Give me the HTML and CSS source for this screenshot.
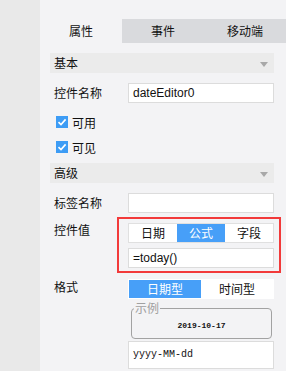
FILE: index.html
```html
<!DOCTYPE html>
<html>
	<head>
		<meta charset="utf-8">
		<link rel="stylesheet" href="styles.css">
		<title>属性</title>
	</head>
	<body>
		<div class="sidebar"></div>
		<div class="panel">
			<div class="tabs">
				<div class="tab active">属性</div>
				<div class="tab">事件</div>
				<div class="tab">移动端</div>
			</div>
			<div class="content">
				<!-- basic -->
				<div class="groupHead"><span>基本</span><span class="arrow"></span></div>
				<div class="row first">
					<div class="label">控件名称</div>
					<div class="field">dateEditor0</div>
				</div>
				<div class="check first"><span class="box"><svg width="12" height="12" viewBox="0 0 12 12"><path d="M2.5 6.2 L5 8.6 L9.6 3.4" fill="none" stroke="#fff" stroke-width="1.6"/></svg></span>可用</div>
				<div class="check"><span class="box"><svg width="12" height="12" viewBox="0 0 12 12"><path d="M2.5 6.2 L5 8.6 L9.6 3.4" fill="none" stroke="#fff" stroke-width="1.6"/></svg></span>可见</div>

				<!-- advanced -->
				<div class="groupHead advanced"><span>高级</span><span class="arrow"></span></div>
				<div class="row first">
					<div class="label">标签名称</div>
					<div class="field"></div>
				</div>
				<div class="row valueRow">
					<div class="label">控件值</div>
					<div class="highlight">
						<div class="segment">
							<div class="seg">日期</div>
							<div class="seg on">公式</div>
							<div class="seg">字段</div>
						</div>
						<div class="field formula">=today()</div>
					</div>
				</div>
				<div class="row formatRow">
					<div class="label">格式</div>
					<div class="formatBox">
						<div class="segment two">
							<div class="seg on">日期型</div>
							<div class="seg">时间型</div>
						</div>
						<fieldset class="sample">
							<legend>示例</legend>
							<div class="sampleDate">2019-10-17</div>
						</fieldset>
						<div class="field pattern">yyyy-MM-dd</div>
					</div>
				</div>
			</div>
		</div>
	</body>
</html>
```
FILE: styles.css
```css
body {
	margin: 0;
	display: flex;
	height: 371px;
	overflow: hidden;
	font-family: "Noto Sans CJK SC", "Liberation Sans", sans-serif;
	font-size: 12px;
	color: #111;
}
.sidebar {
	width: 40px;
	background-color: #e9e9e9;
}
.panel {
	flex: 1;
	background-color: #f3f3f5;
	padding-top: 19px;
}
.tabs {
	display: grid;
	grid-template-columns: 1fr 1fr 1fr;
	height: 24px;
}
.tab {
	background-color: #d9dadd;
	text-align: center;
	line-height: 24px;
	font-size: 12px;
}
.tab.active {
	background-color: #f3f3f5;
}
.content {
	padding: 10px 12px 0 10px;
}
.groupHead {
	height: 20px;
	line-height: 20px;
	background-color: #ebebeb;
	padding: 0 6px 0 4px;
	display: flex;
	justify-content: space-between;
	align-items: center;
}
.groupHead.advanced {
	margin-top: 6px;
}
.arrow {
	width: 0;
	height: 0;
	margin-top: 3px;
	border-left: 4px solid transparent;
	border-right: 4px solid transparent;
	border-top: 5px solid #a8a8a8;
}
.row {
	display: flex;
	align-items: flex-start;
}
.row.first {
	margin-top: 10px;
}
.label {
	width: 74px;
	padding-left: 4px;
	line-height: 20px;
}
.field {
	box-sizing: border-box;
	width: 146px;
	height: 20px;
	line-height: 18px;
	background-color: #fff;
	border: 1px solid #dcdcdc;
	padding-left: 4px;
	font-family: "Liberation Sans", sans-serif;
	font-size: 12px;
}
.check {
	display: flex;
	align-items: center;
	height: 20px;
	margin-top: 5px;
	padding-left: 6px;
}
.check.first {
	margin-top: 9px;
}
.box {
	width: 12px;
	height: 12px;
	background-color: #3d9cf5;
	margin-right: 4px;
	display: flex;
}
.valueRow {
	margin-top: 4px;
}
.valueRow .label {
	margin-top: 3px;
}
.highlight {
	margin: 0 -7px 0 -11px;
	border: 2px solid #f23a3a;
	padding: 4px 5px 3px 9px;
}
.segment {
	box-sizing: border-box;
	width: 146px;
	height: 20px;
	display: grid;
	grid-template-columns: 1fr 1fr 1fr;
	background-color: #fff;
	border: 1px solid #e0e0e0;
}
.segment.two {
	grid-template-columns: 1fr 1fr;
	border-color: #fff;
}
.seg {
	text-align: center;
	line-height: 18px;
	font-size: 12px;
}
.seg.on {
	background-color: #479ff8;
	color: #fff;
}
.formula {
	margin-top: 5px;
}
.formatRow {
	margin-top: 6px;
}
.formatRow .label {
	line-height: 16px;
}
.sample {
	margin: 3px 2px 0 3px;
	padding: 0 0 6px 0;
	border: 1px solid #a2a2a2;
	border-radius: 4px;
}
.sample legend {
	margin-left: 2px;
	padding: 0 1px;
	line-height: 12px;
	font-size: 12px;
	color: #a0a0a0;
}
.sampleDate {
	margin-top: 6px;
	text-align: center;
	line-height: 12px;
	font-family: "Liberation Mono", monospace;
	font-size: 8px;
	font-weight: bold;
}
.pattern {
	margin-top: 2px;
	height: 28px;
	line-height: 26px;
	font-family: "Liberation Mono", monospace;
	font-size: 10px;
}
```
